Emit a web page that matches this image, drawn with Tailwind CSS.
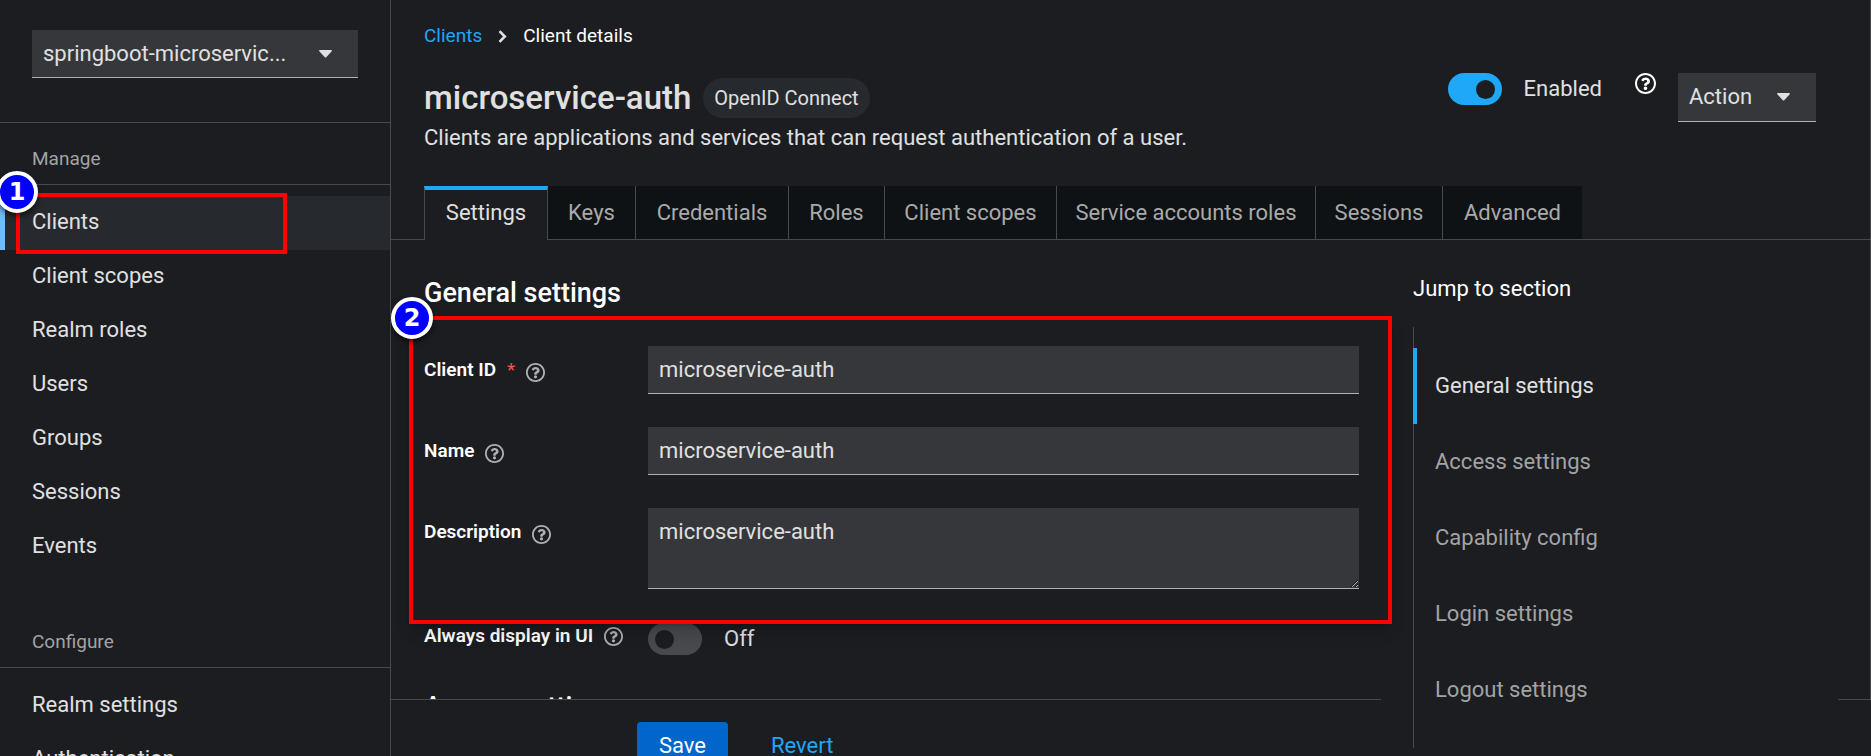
<!DOCTYPE html>
<html lang="en">
<head>
<meta charset="utf-8">
<title>Client details</title>
<script src="https://cdn.jsdelivr.net/npm/@tailwindcss/browser@4"></script>
</head>
<body class="flex h-screen overflow-hidden bg-[#1b1d21] font-['Roboto','Liberation_Sans',sans-serif] text-[22px] leading-8 text-[#e0e0e0] scheme-dark">
<svg class="hidden" aria-hidden="true">
  <symbol id="help" viewBox="8 8 496 496"><path fill="currentColor" d="M256 8C119.043 8 8 119.083 8 256c0 136.997 111.043 248 248 248s248-111.003 248-248C504 119.083 392.957 8 256 8zm0 448c-110.532 0-200-89.431-200-200 0-110.495 89.472-200 200-200 110.491 0 200 89.471 200 200 0 110.53-89.431 200-200 200zm107.244-255.2c0 67.052-72.421 68.084-72.421 92.863V300c0 6.627-5.373 12-12 12h-45.647c-6.627 0-12-5.373-12-12v-8.659c0-35.745 27.1-50.034 47.579-61.516 17.561-9.845 28.324-16.541 28.324-29.579 0-17.246-21.999-28.693-39.784-28.693-23.189 0-33.894 10.977-48.942 29.969-4.057 5.12-11.46 6.071-16.666 2.124l-27.824-21.098c-5.107-3.872-6.251-11.066-2.644-16.363C184.846 131.491 214.94 112 261.794 112c49.071 0 101.45 38.304 101.45 88.8zM298 368c0 23.159-18.841 42-42 42s-42-18.841-42-42 18.841-42 42-42 42 18.841 42 42z"/></symbol>
  <symbol id="caret" viewBox="0 0 13 8"><path fill="currentColor" d="M.8 0h11.4c.7 0 1 .8.5 1.300L7.200 7.200a1 1 0 0 1-1.400 0L.3 1.300C-.2.8.1 0 .8 0z"/></symbol>
</svg>

<nav aria-label="Global" class="w-[391px] shrink-0 border-r border-[#48494d]">
  <div class="border-b border-[#48494d] px-8 pt-[30px] pb-11">
    <div class="relative">
      <select aria-label="Realm" class="block h-12 w-full appearance-none border-b border-[#b0b0b2] bg-[#36373a] pl-[11px] text-[22px] text-[#e0e0e0]">
        <option>springboot-microservic...</option>
      </select>
      <svg class="pointer-events-none absolute top-5 right-[26px] h-2 w-[13px]"><use href="#caret"/></svg>
    </div>
  </div>
  <section>
    <h2 class="border-b border-[#48494d] px-8 pt-[22px] pb-[11px] text-[19px] leading-7 text-[#a3a3a4]">Manage</h2>
    <ul class="pt-[11px]">
      <li class="relative">
        <a href="#" aria-current="page" class="block h-[54px] border-l-5 border-[#73bcf7] bg-[#26292d] pt-[10px] pl-[27px]">Clients</a>
        <div class="pointer-events-none absolute -top-[3px] left-4 h-[61px] w-[271px] border-4 border-[#ff0000]"></div>
        <div class="absolute -top-[25px] -left-1 flex size-[42px] items-center justify-center rounded-full border-4 border-white bg-[#0000ff] font-['DejaVu_Sans',sans-serif] text-2xl font-bold text-white shadow-md shadow-black/50">1</div>
      </li>
      <li><a href="#" class="block h-[54px] px-8 pt-[10px]">Client scopes</a></li>
      <li><a href="#" class="block h-[54px] px-8 pt-[10px]">Realm roles</a></li>
      <li><a href="#" class="block h-[54px] px-8 pt-[10px]">Users</a></li>
      <li><a href="#" class="block h-[54px] px-8 pt-[10px]">Groups</a></li>
      <li><a href="#" class="block h-[54px] px-8 pt-[10px]">Sessions</a></li>
      <li><a href="#" class="block h-[54px] px-8 pt-[10px]">Events</a></li>
    </ul>
  </section>
  <section>
    <h2 class="border-b border-[#48494d] px-8 pt-[54px] pb-[11px] text-[19px] leading-7 text-[#a3a3a4]">Configure</h2>
    <ul class="pt-[11px]">
      <li><a href="#" class="block h-[54px] px-8 pt-[10px]">Realm settings</a></li>
      <li><a href="#" class="block h-[54px] px-8 pt-[10px]">Authentication</a></li>
    </ul>
  </section>
</nav>

<main class="flex min-w-0 flex-1 flex-col">
  <header class="flex h-[186px] justify-between border-r border-[#48494d] pr-[54px] pl-[33px]">
    <div>
      <nav aria-label="Breadcrumb" class="flex items-center pt-[22px] text-[19px] leading-7">
        <a href="#" class="text-[#1fa7f8]">Clients</a>
        <svg class="mx-4 h-[13px] w-[9px]" viewBox="0 0 9 13" fill="none" stroke="currentColor" stroke-width="2.600"><path d="M1.500 1.200 6.800 6.500 1.500 11.800"/></svg>
        <span class="text-white">Client details</span>
      </nav>
      <div class="flex items-center gap-3 pt-7">
        <h1 class="text-[33px] leading-10 font-medium">microservice-auth</h1>
        <span class="flex h-10 items-center rounded-full bg-[#26292d] px-[11px] text-[20px]">OpenID Connect</span>
      </div>
      <p class="pt-1">Clients are applications and services that can request authentication of a user.</p>
    </div>
    <div class="flex items-start pt-[73px]">
      <label class="flex items-center gap-[22px]">
        <input type="checkbox" role="switch" checked class="relative h-8 w-[54px] appearance-none rounded-full bg-[#1fa7f8] before:absolute before:top-[7px] before:right-[7px] before:size-[19px] before:rounded-full before:bg-[#1b1d21]">
        Enabled
      </label>
      <button aria-label="Help for enabled" class="mr-[22px] ml-[33px] text-white"><svg class="size-[21px]"><use href="#help"/></svg></button>
      <button aria-haspopup="menu" class="flex h-[49px] w-[138px] items-center justify-between border-b border-[#b0b0b2] bg-[#36373a] pr-[26px] pl-[11px]">Action<svg class="h-2 w-[13px]"><use href="#caret"/></svg></button>
    </div>
  </header>

  <div role="tablist" class="flex border-r border-b border-[#48494d] pl-[33px] text-[#a9aaab]">
    <button role="tab" aria-selected="true" class="-mb-px h-[54px] w-[124px] border-x border-t-4 border-x-[#48494d] border-t-[#1fa7f8] bg-[#1b1d21] pb-1 text-[#e0e0e0]">Settings</button>
    <button role="tab" class="h-[53px] w-[88px] border-r border-[#48494d] bg-[#0f1214]">Keys</button>
    <button role="tab" class="h-[53px] w-[153px] border-r border-[#48494d] bg-[#0f1214]">Credentials</button>
    <button role="tab" class="h-[53px] w-24 border-r border-[#48494d] bg-[#0f1214]">Roles</button>
    <button role="tab" class="h-[53px] w-[172px] border-r border-[#48494d] bg-[#0f1214]">Client scopes</button>
    <button role="tab" class="h-[53px] w-[259px] border-r border-[#48494d] bg-[#0f1214]">Service accounts roles</button>
    <button role="tab" class="h-[53px] w-[127px] border-r border-[#48494d] bg-[#0f1214]">Sessions</button>
    <button role="tab" class="h-[53px] w-[139px] bg-[#0f1214]">Advanced</button>
  </div>

  <div class="flex min-h-0 flex-1">
    <div class="flex min-w-0 flex-1 flex-col">
      <div class="min-h-0 flex-1 overflow-x-visible overflow-y-clip pr-[22px] pl-[33px]">
        <h2 class="pt-[33px] text-[27px] leading-10 font-medium text-white">General settings</h2>
        <form class="relative grid grid-cols-[224px_1fr] gap-y-[33px] pt-[33px]">
          <div class="flex h-12 items-center text-[19px] font-semibold text-white">
            <label for="client-id">Client ID</label>
            <span class="mx-[11px] font-normal text-[#f4554e]">*</span>
            <button type="button" aria-label="Help for client ID" class="text-[#b0b0b2]"><svg class="mt-1 size-[19px]"><use href="#help"/></svg></button>
          </div>
          <input id="client-id" value="microservice-auth" class="h-12 border-b border-[#b0b0b2] bg-[#36373a] px-[11px]">
          <div class="flex h-12 items-center gap-[11px] text-[19px] font-semibold text-white">
            <label for="name">Name</label>
            <button type="button" aria-label="Help for name" class="text-[#b0b0b2]"><svg class="mt-1 size-[19px]"><use href="#help"/></svg></button>
          </div>
          <input id="name" value="microservice-auth" class="h-12 border-b border-[#b0b0b2] bg-[#36373a] px-[11px]">
          <div class="flex h-12 items-center gap-[11px] text-[19px] font-semibold text-white">
            <label for="description">Description</label>
            <button type="button" aria-label="Help for description" class="text-[#b0b0b2]"><svg class="mt-1 size-[19px]"><use href="#help"/></svg></button>
          </div>
          <textarea id="description" class="h-[81px] border-b border-[#b0b0b2] bg-[#36373a] px-[11px] py-2">microservice-auth</textarea>
          <div class="flex h-7 items-center gap-[11px] text-[19px] font-semibold text-white">
            <label for="always-display">Always display in UI</label>
            <button type="button" aria-label="Help for always display in UI" class="text-[#b0b0b2]"><svg class="size-[19px]"><use href="#help"/></svg></button>
          </div>
          <label class="flex h-[34px] items-center gap-[22px]">
            <input id="always-display" type="checkbox" role="switch" class="relative h-8 w-[54px] appearance-none rounded-full bg-[#48494d] before:absolute before:top-[7px] before:left-[7px] before:size-[19px] before:rounded-full before:bg-[#1b1d21]">
            Off
          </label>
          <div class="pointer-events-none absolute top-[3px] -right-[33px] -left-[15px] h-[308px] border-4 border-[#ff0000] shadow-lg shadow-black/20"></div>
          <div class="absolute -top-4 -left-[33px] flex size-[42px] items-center justify-center rounded-full border-4 border-white bg-[#0000ff] font-['DejaVu_Sans',sans-serif] text-2xl font-bold text-white shadow-md shadow-black/50">2</div>
        </form>
        <h2 class="pt-[31px] text-[27px] leading-10 font-medium text-white">Access settings</h2>
      </div>
      <div class="flex h-[57px] shrink-0 items-start gap-[22px] overflow-hidden border-t border-[#48494d] pt-[22px] pl-[246px]">
        <button class="h-12 w-[91px] shrink-0 rounded bg-[#0066cc] text-white">Save</button>
        <button class="h-12 shrink-0 px-[21px] text-[#1fa7f8]">Revert</button>
      </div>
    </div>
    <nav aria-label="Jump to section" class="w-[457px] shrink-0 pt-[33px] pl-8">
      <h2 class="text-white">Jump to section</h2>
      <ul class="mt-[22px] h-[421px] border-l border-[#48494d] pt-[21px] text-[#a3a3a4]">
        <li class="-ml-px"><a href="#" class="flex h-[76px] items-center border-l-4 border-[#1fa7f8] pl-[18px] text-[#e0e0e0]">General settings</a></li>
        <li><a href="#" class="flex h-[76px] items-center pl-[21px]">Access settings</a></li>
        <li><a href="#" class="flex h-[76px] items-center pl-[21px]">Capability config</a></li>
        <li><a href="#" class="flex h-[76px] items-center pl-[21px]">Login settings</a></li>
        <li><a href="#" class="flex h-[76px] items-center pl-[21px]">Logout settings</a></li>
      </ul>
    </nav>
    <div class="w-[33px] shrink-0">
      <div class="h-[460px] border-r border-b border-[#48494d]"></div>
    </div>
  </div>
</main>
</body>
</html>
